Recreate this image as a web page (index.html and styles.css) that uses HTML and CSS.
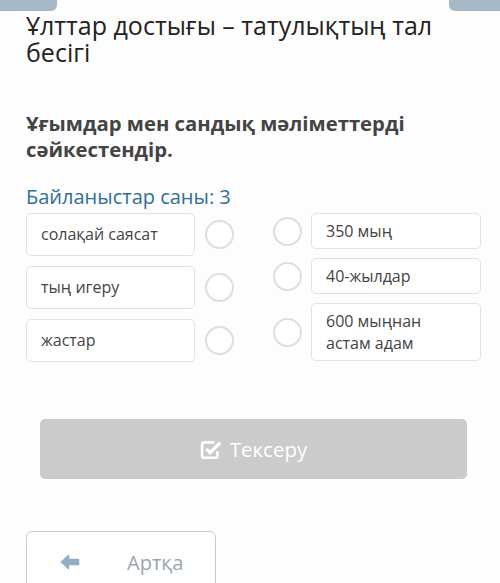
FILE: index.html
```html
<!DOCTYPE html>
<html lang="kk">
<head>
  <meta charset="UTF-8">
  <title>Сәйкестендіру</title>
  <link rel="stylesheet" href="styles.css">
</head>
<body>

  <div class="tabs">
    <span class="tab tab-left"></span>
    <span class="tab tab-right"></span>
  </div>

  <div class="page">
    <h1 class="title">Ұлттар достығы – татулықтың тал бесігі</h1>

    <h2 class="question">Ұғымдар мен сандық мәліметтерді сәйкестендір.</h2>

    <p class="count">Байланыстар саны: 3</p>

    <div class="match">
      <div class="col col-left">
        <div class="row">
          <div class="item item-left">солақай саясат</div>
          <span class="dot"></span>
        </div>
        <div class="row">
          <div class="item item-left">тың игеру</div>
          <span class="dot"></span>
        </div>
        <div class="row">
          <div class="item item-left">жастар</div>
          <span class="dot"></span>
        </div>
      </div>

      <div class="col col-right">
        <div class="row">
          <span class="dot"></span>
          <div class="item item-right">350 мың</div>
        </div>
        <div class="row">
          <span class="dot"></span>
          <div class="item item-right">40-жылдар</div>
        </div>
        <div class="row">
          <span class="dot"></span>
          <div class="item item-right">600 мыңнан астам адам</div>
        </div>
      </div>
    </div>

    <button class="check-btn" disabled>
      <svg class="check-icon" viewBox="0 0 20 20" width="23" height="23">
        <path d="M15.2 11.5v3.9a1.8 1.8 0 0 1-1.8 1.8H3.6A1.8 1.8 0 0 1 1.8 15.4V5.6A1.8 1.8 0 0 1 3.6 3.8h8.8" fill="none" stroke="#fff" stroke-width="2.2"/>
        <path d="M5.4 9.4l3.4 3.4 8.8-8.8" fill="none" stroke="#fff" stroke-width="2.9"/>
      </svg>
      Тексеру
    </button>

    <button class="back-btn">
      <svg class="back-icon" viewBox="0 0 20 16" width="20" height="16">
        <path d="M1.5 8L8.5 1.5V5.5H18.5V10.5H8.5V14.5Z" fill="#8fb0c8" stroke="#8fb0c8" stroke-width="1.5" stroke-linejoin="round"/>
      </svg>
      <span>Артқа</span>
    </button>
  </div>

</body>
</html>
```

FILE: styles.css
```css
body {
  margin: 0;
  background: #fdfdfd;
  font-family: "Open Sans", "Noto Sans", sans-serif;
  color: #222;
}

.tabs {
  display: flex;
  justify-content: space-between;
  height: 11px;
}

.tab {
  display: block;
  background-color: #a6b8c6;
}

.tab-left {
  width: 57px;
  border-bottom-right-radius: 6px;
}

.tab-right {
  width: 51px;
  border-bottom-left-radius: 6px;
}

.page {
  padding: 0 19px 0 26px;
}

.title {
  margin: 1px 0 0;
  font-size: 25px;
  font-weight: 400;
  line-height: 27px;
  color: #222;
}

.question {
  margin: 44px 0 0;
  font-size: 20.3px;
  font-weight: 700;
  line-height: 26px;
  color: #444;
}

.count {
  margin: 22px 0 0;
  font-size: 20px;
  line-height: 26px;
  color: #2e6f96;
}

.match {
  display: flex;
  justify-content: space-between;
  margin-top: 3px;
}

.col {
  display: flex;
  flex-direction: column;
}

.col-left {
  gap: 10px;
}

.col-right {
  gap: 9px;
}

.row {
  display: flex;
  align-items: center;
  gap: 10px;
}

.col-right .row {
  gap: 9px;
}

.item {
  box-sizing: border-box;
  border: 1px solid #e2e2e2;
  border-radius: 5px;
  background: #fff;
  font-size: 16px;
  line-height: 22px;
  color: #444;
}

.item-left {
  width: 169px;
  padding: 9px 14px 10px;
}

.item-right {
  width: 170px;
  padding: 6px 14px;
}

.dot {
  display: block;
  box-sizing: border-box;
  width: 29px;
  height: 29px;
  border: 2.5px solid #dedede;
  border-radius: 50%;
  background: #fff;
}

.check-btn {
  display: flex;
  align-items: center;
  justify-content: center;
  gap: 7px;
  width: 427px;
  height: 60px;
  margin: 57px 0 0 14px;
  border: none;
  border-radius: 5px;
  background-color: #cbcbcb;
  color: #fff;
  font-family: "Open Sans", "Noto Sans", sans-serif;
  font-size: 20.5px;
}

.back-btn {
  display: flex;
  align-items: center;
  width: 190px;
  height: 62px;
  margin-top: 52px;
  padding: 0 0 0 33px;
  border: 1.5px solid #c3cbd0;
  border-radius: 6px;
  background: #fff;
  color: #9aa6ae;
  font-family: "Open Sans", "Noto Sans", sans-serif;
  font-size: 20px;
}

.back-btn span {
  margin-left: 47px;
}
```
